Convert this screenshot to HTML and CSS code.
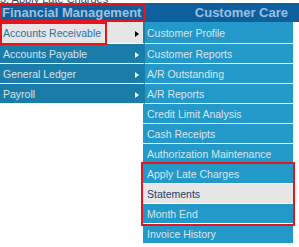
FILE: index.html
```html
<!DOCTYPE html>
<html lang="en">
<head>
    <meta charset="UTF-8">
    <meta name="viewport" content="width=device-width, initial-scale=1.0">
    <title>Financial Management - Accounts Receivable</title>
    <link rel="stylesheet" href="styles.css">
</head>
<body>
    <div class="clip"><span>3. Apply Late Charges</span></div>

    <div class="topbar">
        <div class="tab tab-marked">Financial Management</div>
        <div class="tab tab-right">Customer Care</div>
    </div>

    <div class="menu">
        <ul class="main">
            <li class="active">
                <span>Accounts Receivable</span><i class="arrow"></i>
                <b class="mark"></b>
            </li>
            <li><span>Accounts Payable</span><i class="arrow"></i></li>
            <li><span>General Ledger</span><i class="arrow"></i></li>
            <li><span>Payroll</span><i class="arrow"></i></li>
        </ul>

        <div class="sub">
            <div class="item">Customer Profile</div>
            <div class="item">Customer Reports</div>
            <div class="item">A/R Outstanding</div>
            <div class="item">A/R Reports</div>
            <div class="item">Credit Limit Analysis</div>
            <div class="item">Cash Receipts</div>
            <div class="item">Authorization Maintenance</div>
            <!-- items flagged for this step -->
            <div class="flagged">
                <div class="item">Apply Late Charges</div>
                <div class="item current">Statements</div>
                <div class="item">Month End</div>
            </div>
            <div class="item">Invoice History</div>
        </div>
    </div>
</body>
</html>
```

FILE: styles.css
```css
body {
    margin: 0;
    font-family: "Liberation Sans", Arial, sans-serif;
    font-size: 10.5px;
    background: #fff;
}
.clip {
    height: 3px;
    overflow: hidden;
    position: relative;
}
.clip span {
    position: absolute;
    left: 0;
    bottom: -2px;
    font-size: 11px;
    line-height: 11px;
    color: #444;
}
.topbar {
    display: flex;
    height: 19px;
    background: #0d5f9d;
}
.tab {
    font-size: 13px;
    font-weight: bold;
    line-height: 19px;
    white-space: nowrap;
}
.tab-marked {
    width: 146px;
    box-sizing: border-box;
    padding-left: 2px;
    color: #a5bfd6;
    outline: 2px solid #e8131b;
    outline-offset: -2px;
}
.tab-right {
    flex: 1;
    text-align: right;
    padding-right: 11px;
    color: #98c0e0;
}
.menu {
    display: flex;
    align-items: flex-start;
}
.main {
    list-style: none;
    margin: 0;
    padding: 0;
    width: 145px;
    position: relative;
    z-index: 1;
}
.main li {
    position: relative;
    display: flex;
    align-items: center;
    height: 19px;
    padding-left: 3px;
    background: #1a7ca8;
    color: #d6e4ec;
    border-right: 2px solid #1a7ca8;
    border-bottom: 1px solid #fff;
}
.main li:first-child {
    height: 21px;
}
.main li.active {
    background: #e6e6e6;
    color: #2a70a2;
}
.arrow {
    margin-left: auto;
    margin-right: 4px;
    margin-top: 3px;
    width: 0;
    height: 0;
    border-left: 4px solid #fff;
    border-top: 3.5px solid transparent;
    border-bottom: 3.5px solid transparent;
}
.active .arrow {
    border-left-color: #000;
}
.mark {
    position: absolute;
    left: 0;
    top: 0;
    width: 107px;
    height: 23px;
    box-sizing: border-box;
    border: 2px solid #e8131b;
    z-index: 2;
}
.sub {
    width: 150px;
    margin-left: -2px;
}
.item {
    display: flex;
    align-items: center;
    height: 19px;
    padding-left: 4px;
    background: #2399c9;
    color: #d8e6ee;
    border-bottom: 1px solid #fff;
    white-space: nowrap;
}
.sub > .item:first-child {
    height: 21px;
}
.item.current {
    background: #e6e6e6;
    color: #1e416b;
}
.flagged {
    outline: 2px solid #e8131b;
}
```
